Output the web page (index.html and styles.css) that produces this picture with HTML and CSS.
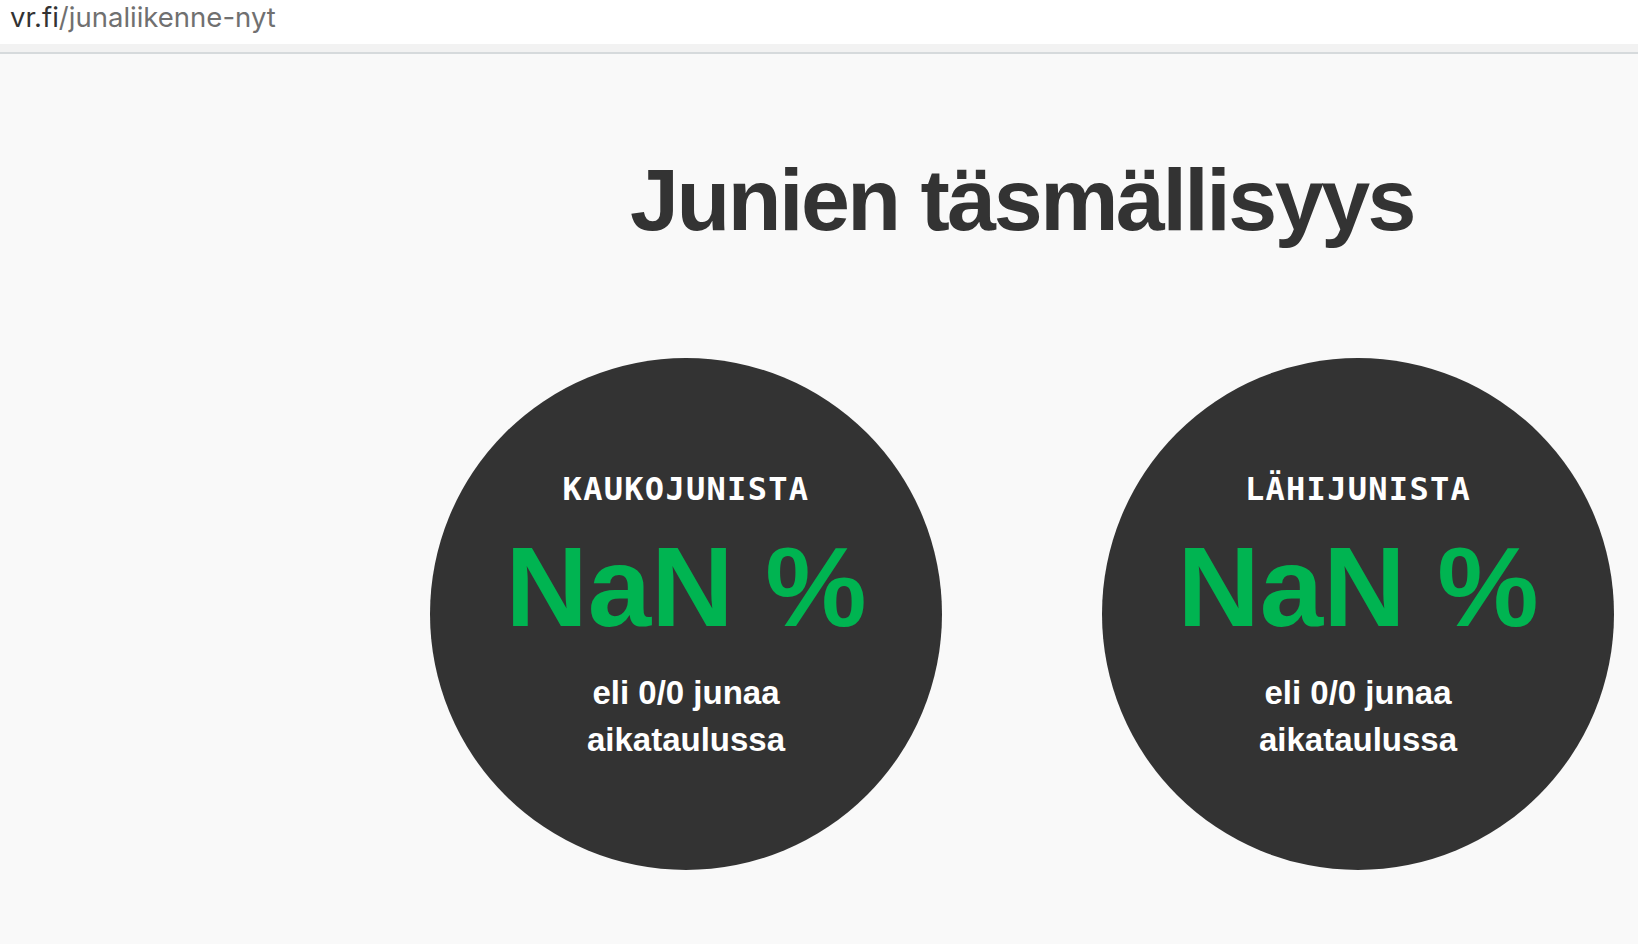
FILE: index.html
```html
<!DOCTYPE html>
<html lang="fi">
<head>
    <meta charset="UTF-8">
    <meta name="viewport" content="width=device-width, initial-scale=1.0">
    <title>Junaliikenne nyt</title>
    <link rel="stylesheet" href="styles.css">
</head>
<body>
    <div id="url-bar">
        <span class="url-host">vr.fi</span><span class="url-path">/junaliikenne-nyt</span>
    </div>
    <div id="url-strip"></div>

    <div id="page">
        <aside id="side"></aside>
        <main id="main-section">
            <h1 class="page-title">Junien täsmällisyys</h1>
            <div class="stats">
                <div class="stat-circle">
                    <div class="stat-label">KAUKOJUNISTA</div>
                    <div class="stat-value">NaN %</div>
                    <div class="stat-sub">eli 0/0 junaa<br>aikataulussa</div>
                </div>
                <div class="stat-circle">
                    <div class="stat-label">LÄHIJUNISTA</div>
                    <div class="stat-value">NaN %</div>
                    <div class="stat-sub">eli 0/0 junaa<br>aikataulussa</div>
                </div>
            </div>
        </main>
    </div>
</body>
</html>
```
FILE: styles.css
```css
body{
    margin: 0px;
    background-color: #f9f9f9;
    font-family: "Liberation Sans", Arial, sans-serif;
    color: #333333;
}
#url-bar{
    height: 44px;
    background-color: #fff;
    padding-left: 10px;
    font-family: Inter, "Liberation Sans", sans-serif;
    font-size: 27.5px;
    line-height: 34px;
}
.url-host{
    color: #333;
}
.url-path{
    color: #707070;
}
#url-strip{
    height: 8px;
    background-color: #f2f2f2;
    border-bottom: 2px solid #d6dadc;
}
#page{
    display: grid;
    grid-template-columns: 406px 1fr;
}
#main-section{
    padding: 0px 24px;
}
.page-title{
    margin: 93px 0px 0px;
    text-align: center;
    font-size: 88px;
    line-height: 1.2;
    font-weight: 700;
    letter-spacing: -2.5px;
    color: #333333;
}
.stats{
    display: flex;
    justify-content: space-between;
    margin-top: 105px;
}
.stat-circle{
    width: 512px;
    height: 512px;
    border-radius: 50%;
    background-color: #333333;
    display: flex;
    flex-direction: column;
    align-items: center;
    justify-content: center;
    text-align: center;
    padding-top: 4px;
    box-sizing: border-box;
}
.stat-label{
    font-family: "DejaVu Sans Mono", monospace;
    font-weight: 700;
    font-size: 32px;
    line-height: 40px;
    letter-spacing: 1.3px;
    color: #fff;
}
.stat-value{
    margin-top: 21px;
    font-size: 114px;
    line-height: 1;
    font-weight: 700;
    color: #00b451;
}
.stat-sub{
    margin-top: 25px;
    font-size: 33px;
    line-height: 47px;
    font-weight: 700;
    color: #fff;
}
```
